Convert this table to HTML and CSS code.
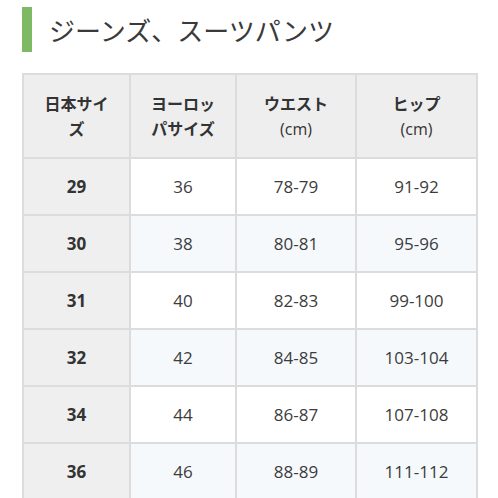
FILE: index.html
```html
<!DOCTYPE html>
<html lang="ja">
<head>
<meta charset="utf-8">
<link rel="stylesheet" href="styles.css">
</head>
<body>
<h2 class="title">ジーンズ、スーツパンツ</h2>
<table class="size-table">
  <colgroup>
    <col class="c1"><col class="c2"><col class="c3"><col class="c4">
  </colgroup>
  <thead>
    <tr>
      <th>日本サイ<br>ズ</th>
      <th>ヨーロッ<br>パサイズ</th>
      <th>ウエスト<br><span class="unit">(cm)</span></th>
      <th>ヒップ<br><span class="unit">(cm)</span></th>
    </tr>
  </thead>
  <tbody>
    <tr><td class="jp">29</td><td>36</td><td>78-79</td><td>91-92</td></tr>
    <tr><td class="jp">30</td><td>38</td><td>80-81</td><td>95-96</td></tr>
    <tr><td class="jp">31</td><td>40</td><td>82-83</td><td>99-100</td></tr>
    <tr><td class="jp">32</td><td>42</td><td>84-85</td><td>103-104</td></tr>
    <tr><td class="jp">34</td><td>44</td><td>86-87</td><td>107-108</td></tr>
    <tr><td class="jp">36</td><td>46</td><td>88-89</td><td>111-112</td></tr>
  </tbody>
</table>
</body>
</html>
```
FILE: styles.css
```css
html, body {
  margin: 0;
  padding: 0;
  background: #ffffff;
}
body {
  font-family: "Open Sans", "Noto Sans", "Noto Sans CJK JP", sans-serif;
  color: #333333;
  overflow: hidden;
}
.title {
  margin: 7px 0 0 22px;
  height: 45px;
  display: flex;
  align-items: center;
  border-left: 10px solid #7dba63;
  padding-left: 17px;
  font-family: "Noto Sans CJK JP", sans-serif;
  font-size: 26px;
  font-weight: 400;
  color: #3a3a3a;
}
.size-table {
  margin: 21px 0 0 22px;
  width: 454px;
  table-layout: fixed;
  border-collapse: separate;
  border-spacing: 0;
  border-top: 2px solid #dcdcdc;
  border-left: 2px solid #dcdcdc;
}
.c1 { width: 107px; }
.c2 { width: 106px; }
.c3 { width: 120px; }
.c4 { width: 121px; }
.size-table th,
.size-table td {
  border-right: 2px solid #dcdcdc;
  border-bottom: 2px solid #dcdcdc;
  text-align: center;
  vertical-align: middle;
  padding: 0;
}
.size-table th {
  height: 82px;
  background: #eeeeee;
  font-family: "Noto Sans CJK JP", sans-serif;
  font-size: 16px;
  font-weight: 700;
  line-height: 25px;
  color: #333333;
}
.size-table th .unit {
  font-family: "Open Sans", "Noto Sans CJK JP", sans-serif;
  font-weight: 400;
}
.size-table td {
  height: 55px;
  font-size: 17px;
  color: #3c3c3c;
  background: #ffffff;
}
.size-table tbody tr:nth-child(even) td {
  background: #f5f9fc;
}
.size-table td.jp,
.size-table tbody tr:nth-child(even) td.jp {
  background: #efefef;
  font-weight: 700;
  color: #333333;
}
```
